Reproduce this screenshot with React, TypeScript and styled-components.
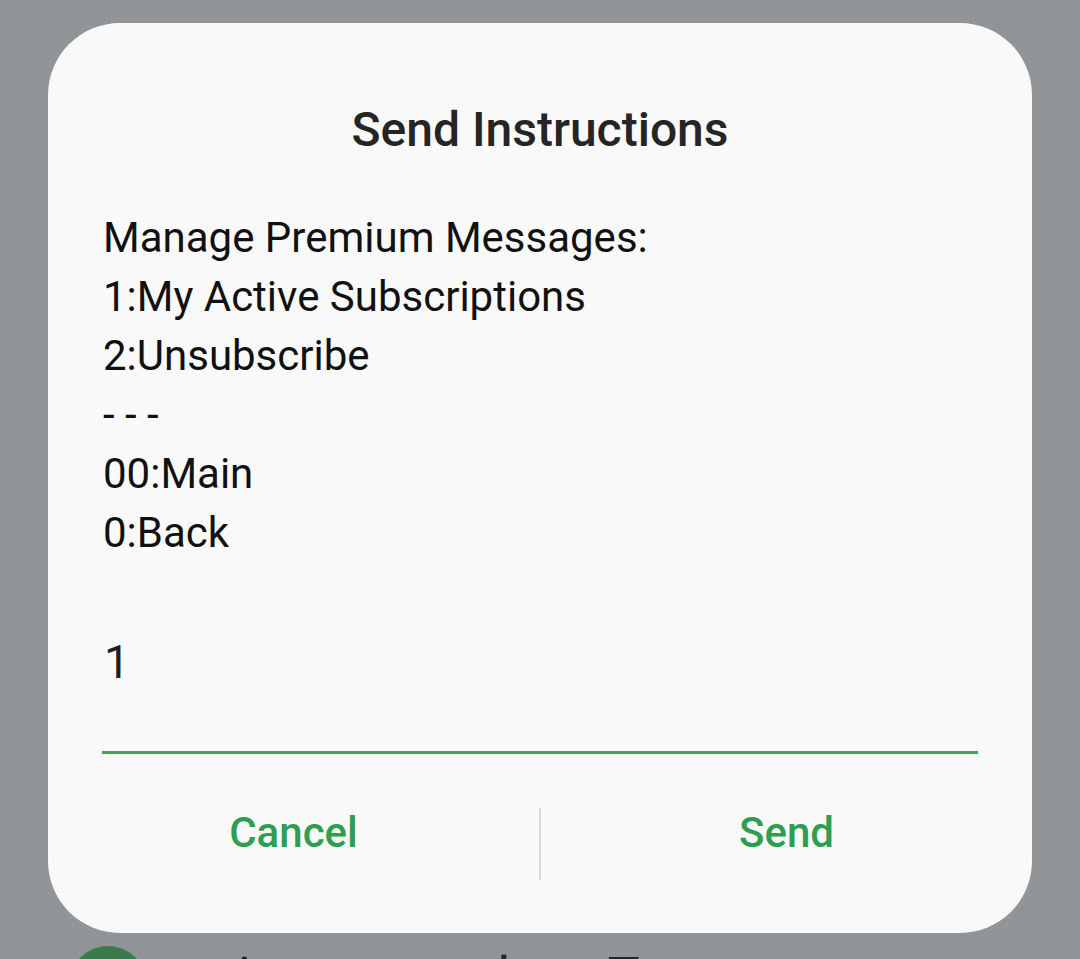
import React from "react";
import styled, { createGlobalStyle } from "styled-components";

const Global = createGlobalStyle`
  html, body { margin: 0; padding: 0; }
  body { background: #919597; font-family: Roboto, "Noto Sans", sans-serif; }
`;

const Screen = styled.div`
  width: 1080px;
  height: 959px;
  background: #919597;
  overflow: hidden;
  display: flex;
  flex-direction: column;
  padding-top: 23px;
  box-sizing: border-box;
`;

const Dialog = styled.div`
  flex-shrink: 0;
  margin-left: 48px;
  width: 984px;
  height: 910px;
  box-sizing: border-box;
  background: #f9f9f9;
  border-radius: 72px;
  padding: 0 54px 0 54px;
  display: flex;
  flex-direction: column;
`;

const Title = styled.h1`
  margin: 0;
  padding-top: 77px;
  font-size: 48px;
  line-height: 60px;
  font-weight: 500;
  color: #252525;
  text-align: center;
`;

const Message = styled.div`
  margin-top: 48px;
  padding-left: 1px;
  display: flex;
  flex-direction: column;
`;

const Line = styled.div`
  font-size: 42px;
  line-height: 59px;
  color: #111;
  white-space: pre;
`;

const InputField = styled.div`
  margin-top: 70px;
  height: 122px;
  border-bottom: 3px solid #3aa85a;
  font-size: 46px;
  line-height: 60px;
  color: #1e1e1e;
  box-sizing: border-box;
  padding-left: 2px;
`;

const Actions = styled.div`
  margin-top: 54px;
  display: flex;
  align-items: flex-start;
  height: 72px;
  margin-left: -54px;
  margin-right: -54px;
`;

const ActionButton = styled.button`
  flex: 1;
  border: none;
  background: transparent;
  font-family: Roboto, "Noto Sans", sans-serif;
  font-size: 42px;
  line-height: 50px;
  font-weight: 500;
  color: #2f9e50;
  padding: 0;
  height: 50px;
`;

const Divider = styled.div`
  width: 2px;
  height: 72px;
  background: #d8d8d8;
`;

const BelowRow = styled.div`
  flex-shrink: 0;
  margin-top: 13px;
  display: flex;
  align-items: flex-start;
  padding-left: 69px;
  gap: 43px;
`;

const Avatar = styled.div`
  width: 78px;
  height: 78px;
  border-radius: 50%;
  background: #3b7a4c;
  flex-shrink: 0;
`;

const BelowText = styled.div`
  font-size: 54px;
  line-height: 54px;
  color: #232526;
  margin-top: 4px;
  white-space: pre;
`;

const lines = [
  "Manage Premium Messages:",
  "1:My Active Subscriptions",
  "2:Unsubscribe",
  "- - -",
  "00:Main",
  "0:Back",
];

export default function App() {
  return (
    <>
      <Global />
      <Screen>
        <Dialog>
          <Title>Send Instructions</Title>
          <Message>
            {lines.map((l) => (
              <Line key={l}>{l}</Line>
            ))}
          </Message>
          <InputField>1</InputField>
          <Actions>
            <ActionButton>Cancel</ActionButton>
            <Divider />
            <ActionButton>Send</ActionButton>
          </Actions>
        </Dialog>
        <BelowRow>
          <Avatar />
          <BelowText>ari vacuum al ow Tu</BelowText>
        </BelowRow>
      </Screen>
    </>
  );
}
